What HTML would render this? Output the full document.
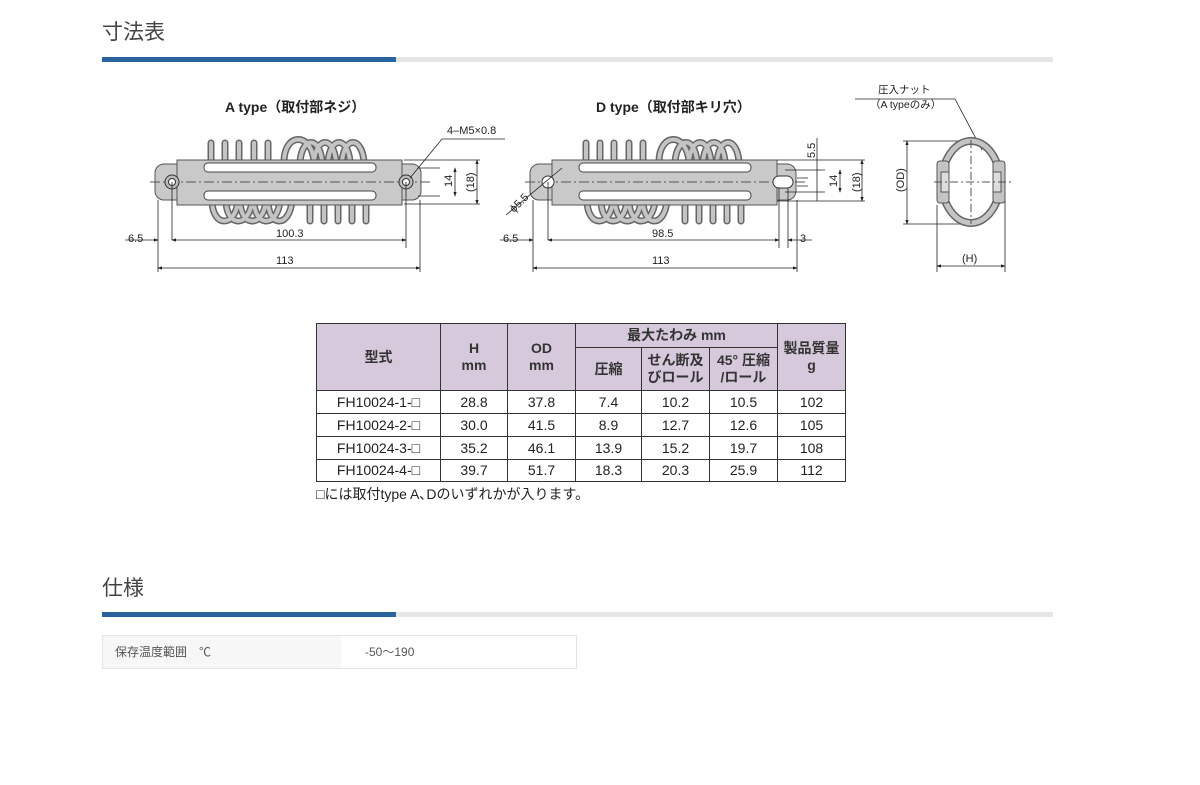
<!DOCTYPE html>
<html><head><meta charset="utf-8"><style>
body{margin:0;background:#fff;width:1200px;height:785px;overflow:hidden;position:relative;font-family:"Liberation Sans","Noto Sans CJK JP",sans-serif;}
.h{position:absolute;left:102px;font-size:21px;color:#444;font-weight:normal}
.bar{position:absolute;left:102px;width:951px;height:5px;background:#e6e6e6}
.bar div{width:294px;height:5px;background:#2a64a0}
table.t{position:absolute;left:316px;top:323px;border-collapse:collapse;font-size:14px;color:#222}
table.t td{border:1px solid #333;text-align:center;padding:0;line-height:17px}
table.t .hd td{background:#d6c9dc;font-weight:bold;color:#333}
.note{position:absolute;left:316px;top:484px;font-size:14px;color:#222}
.spec{position:absolute;left:102px;top:635px;width:475px;height:34px;border:1px solid #e4e4e4;box-sizing:border-box;font-size:12px;color:#555}
.spec .l{position:absolute;left:0;top:0;width:238px;height:32px;background:#f7f7f7;line-height:32px;padding-left:12px;box-sizing:border-box}
.spec .r{position:absolute;left:262px;top:0;line-height:32px}
</style></head><body>
<div class="h" style="top:16px">寸法表</div>
<div class="bar" style="top:57px"><div></div></div>

<svg width="1200" height="300" style="position:absolute;left:0;top:0" font-family="Liberation Sans, Noto Sans CJK JP, sans-serif">
<defs>
<g id="part">
 <g fill="none" stroke-linecap="round">
  <g stroke="#666" stroke-width="7">
   <path d="M211,162V143M225,162V143M239,162V143M254,162V143M268,162V143"/>
   <path d="M284,162C284,132 312,132 314,162M300,162C302,136 320,136 322,162M314,162C316,136 334,136 336,162M328,162C330,136 348,136 350,162M342,162C344,136 362,136 364,162"/>
   <path d="M212,200C212,228 236,228 238,200M226,200C226,228 250,228 252,200M240,200C240,228 264,228 266,200M254,200C254,228 278,228 280,200M268,200C268,228 290,228 292,200"/>
   <path d="M310,200V221M324,200V221M338,200V221M352,200V221M366,200V221"/>
  </g>
  <g stroke="#c4c4c4" stroke-width="4">
   <path d="M211,162V143M225,162V143M239,162V143M254,162V143M268,162V143"/>
   <path d="M284,162C284,132 312,132 314,162M300,162C302,136 320,136 322,162M314,162C316,136 334,136 336,162M328,162C330,136 348,136 350,162M342,162C344,136 362,136 364,162"/>
   <path d="M212,200C212,228 236,228 238,200M226,200C226,228 250,228 252,200M240,200C240,228 264,228 266,200M254,200C254,228 278,228 280,200M268,200C268,228 290,228 292,200"/>
   <path d="M310,200V221M324,200V221M338,200V221M352,200V221M366,200V221"/>
  </g>
 </g>
 <rect x="155" y="164" width="266" height="36" rx="9" fill="#c9c9c9" stroke="#555" stroke-width="1"/>
 <rect x="177" y="160" width="225" height="45" fill="#c9c9c9" stroke="#555" stroke-width="1"/>
 <rect x="178" y="165" width="223" height="35" fill="#c9c9c9"/>
 <rect x="204" y="163" width="172" height="9" rx="4" fill="#fff" stroke="#444"/>
 <rect x="204" y="191" width="172" height="9" rx="4" fill="#fff" stroke="#444"/>
 <path d="M150,182H430" stroke="#555" stroke-dasharray="10,3,2,3" stroke-width="1"/>
</g>
<marker id="ar" markerWidth="6" markerHeight="6" refX="5" refY="3" orient="auto-start-reverse"><path d="M0,1L6,3L0,5z" fill="#222"/></marker>
</defs>
<g font-size="14" font-weight="bold" fill="#222">
<text x="225" y="112">A type（取付部ネジ）</text>
<text x="596" y="112">D type（取付部キリ穴）</text>
</g>
<use href="#part"/>
<use href="#part" transform="translate(375,0)"/>
<circle cx="172" cy="182" r="7" fill="#bbb" stroke="#333"/><circle cx="172" cy="182" r="3.5" fill="#fff" stroke="#333"/>
<circle cx="406" cy="182" r="7" fill="#bbb" stroke="#333"/><circle cx="406" cy="182" r="3.5" fill="#fff" stroke="#333"/>
<circle cx="548" cy="182" r="6" fill="#fff" stroke="#333"/>
<rect x="773" y="176" width="20" height="12" rx="6" fill="#fff" stroke="#333"/>
<g stroke="#222" stroke-width="0.8" fill="none">
 <path d="M158,200V272M172,182V240M406,182V248M420,200V272"/>
 <path d="M172,240H406" marker-start="url(#ar)" marker-end="url(#ar)"/>
 <path d="M158,268H420" marker-start="url(#ar)" marker-end="url(#ar)"/>
 <path d="M125,240H158" marker-end="url(#ar)"/>
 <path d="M404,160H480M404,204H480M418,168H440M418,196H440"/>
 <path d="M455,168V196" marker-start="url(#ar)" marker-end="url(#ar)"/>
 <path d="M477,160V204" marker-start="url(#ar)" marker-end="url(#ar)"/>
 <path d="M410,178L442,139H505"/>
 <path d="M533,200V272M548,182V240M779,188V248M788,188V248M797,200V272"/>
 <path d="M548,240H779" marker-start="url(#ar)" marker-end="url(#ar)"/>
 <path d="M533,268H797" marker-start="url(#ar)" marker-end="url(#ar)"/>
 <path d="M500,240H533" marker-end="url(#ar)"/>
 <path d="M788,240H812" marker-start="url(#ar)"/>
 <path d="M777,160H865M777,201H865M785,170H825M785,192H825M797,178H808M797,186H808"/>
 <path d="M817,138V201"/>
 <path d="M840,170V192" marker-start="url(#ar)" marker-end="url(#ar)"/>
 <path d="M862,160V201" marker-start="url(#ar)" marker-end="url(#ar)"/>
 <path d="M506,215L562,168"/>
 <path d="M855,99H955L982,150"/>
 <path d="M903,141H972M903,224H972M937,205V272M1005,195V272"/>
 <path d="M907,141V224" marker-start="url(#ar)" marker-end="url(#ar)"/>
 <path d="M937,266H1005" marker-start="url(#ar)" marker-end="url(#ar)"/>
</g>
<g font-size="11" fill="#222">
 <text x="447" y="134">4–M5×0.8</text>
 <text x="276" y="237">100.3</text>
 <text x="276" y="264">113</text>
 <text x="128" y="242">6.5</text>
 <text x="503" y="242">6.5</text>
 <text x="652" y="237">98.5</text>
 <text x="652" y="264">113</text>
 <text x="800" y="242">3</text>
 <text x="452" y="187" transform="rotate(-90 452 187)">14</text>
 <text x="474" y="192" transform="rotate(-90 474 192)">(18)</text>
 <text x="815" y="158" transform="rotate(-90 815 158)">5.5</text>
 <text x="837" y="187" transform="rotate(-90 837 187)">14</text>
 <text x="860" y="192" transform="rotate(-90 860 192)">(18)</text>
 <text x="514" y="213" transform="rotate(-45 514 213)">ϕ5.5</text>
 <text x="878" y="93" font-size="10.5">圧入ナット</text>
 <text x="870" y="108" font-size="10.5">（A typeのみ）</text>
 <text x="904" y="192" transform="rotate(-90 904 192)">(OD)</text>
 <text x="962" y="262">(H)</text>
</g>
<g stroke="#555" stroke-width="1">
 <ellipse cx="971" cy="182" rx="29" ry="41" fill="none" stroke="#666" stroke-width="8"/>
 <ellipse cx="971" cy="182" rx="29" ry="41" fill="none" stroke="#c4c4c4" stroke-width="5"/>
 <rect x="937" y="161" width="12" height="42" rx="3" fill="#c4c4c4"/>
 <rect x="993" y="161" width="12" height="42" rx="3" fill="#c4c4c4"/>
 <rect x="941" y="172" width="8" height="20" fill="#ddd"/>
 <rect x="993" y="172" width="8" height="20" fill="#ddd"/>
 <path d="M934,182H1012M971,140V224" stroke-dasharray="8,3,2,3" fill="none"/>
</g>
</svg>

<table class="t">
<colgroup><col style="width:124px"><col style="width:67px"><col style="width:68px"><col style="width:66px"><col style="width:68px"><col style="width:68px"><col style="width:68px"></colgroup>
<tr class="hd" style="height:24px"><td rowspan="2">型式</td><td rowspan="2">H<br>mm</td><td rowspan="2">OD<br>mm</td><td colspan="3">最大たわみ mm</td><td rowspan="2">製品質量<br>g</td></tr>
<tr class="hd" style="height:43px"><td>圧縮</td><td>せん断及<br>びロール</td><td>45° 圧縮<br>/ロール</td></tr>
<tr style="height:23px"><td>FH10024-1-□</td><td>28.8</td><td>37.8</td><td>7.4</td><td>10.2</td><td>10.5</td><td>102</td></tr>
<tr style="height:23px"><td>FH10024-2-□</td><td>30.0</td><td>41.5</td><td>8.9</td><td>12.7</td><td>12.6</td><td>105</td></tr>
<tr style="height:23px"><td>FH10024-3-□</td><td>35.2</td><td>46.1</td><td>13.9</td><td>15.2</td><td>19.7</td><td>108</td></tr>
<tr style="height:22px"><td>FH10024-4-□</td><td>39.7</td><td>51.7</td><td>18.3</td><td>20.3</td><td>25.9</td><td>112</td></tr>
</table>
<div class="note">□には取付type A､Dのいずれかが入ります。</div>

<div class="h" style="top:572px">仕様</div>
<div class="bar" style="top:612px"><div></div></div>
<div class="spec"><div class="l">保存温度範囲　℃</div><div class="r">-50～190</div></div>
</body></html>
